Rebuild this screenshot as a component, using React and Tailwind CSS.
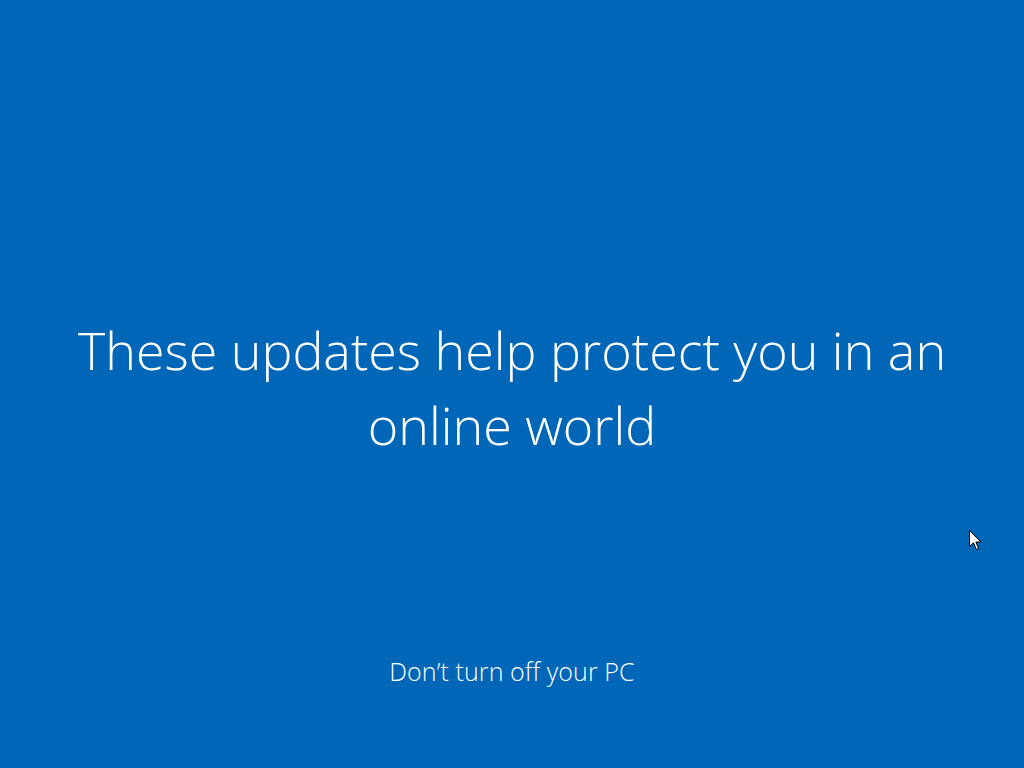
import React from 'react';

const Cursor = () => (
  <svg width="13" height="21" viewBox="0 0 13 21" className="absolute left-[969px] top-[530px]">
    <path d="M0.5 0.5 L0.5 16.5 L4.5 12.8 L7.3 19.5 L9.6 18.5 L6.9 12 L12 12 Z" fill="#fff" stroke="#000" strokeWidth="1" />
  </svg>
);

const App = () => {
  return (
    <div className="relative w-[1024px] h-[768px] bg-[#0067b8] text-white flex flex-col items-center overflow-hidden font-['Open_Sans',sans-serif]">
      <div className="flex-1 flex items-center justify-center pt-[122px]">
        <h1 className="text-center font-light text-[52px] leading-[75px] w-[900px]">
          These updates help protect you in an online world
        </h1>
      </div>
      <p className="font-light text-[25px] tracking-[0.1px] pb-[78px]">Don’t turn off your PC</p>
      <Cursor />
    </div>
  );
};

export default App;
